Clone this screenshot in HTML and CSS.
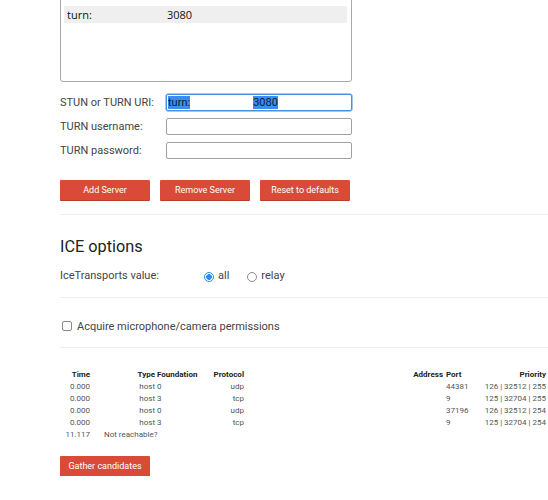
FILE: index.html
```html
<!DOCTYPE html>
<html>
<head>
<meta charset="utf-8">
<link rel="stylesheet" href="styles.css">
</head>
<body>
<div class="page">
  <div class="listbox">
    <div class="option"><span class="opt-a">turn:</span><span class="opt-b">3080</span></div>
  </div>

  <div class="form">
    <div class="row">
      <label class="label">STUN or TURN URI:</label>
      <div class="input focused"><span class="sel">turn:</span><span class="sel sel-b">3080</span></div>
    </div>
    <div class="row">
      <label class="label">TURN username:</label>
      <div class="input"></div>
    </div>
    <div class="row">
      <label class="label">TURN password:</label>
      <div class="input"></div>
    </div>
  </div>

  <div class="buttons">
    <button class="btn">Add Server</button>
    <button class="btn">Remove Server</button>
    <button class="btn">Reset to defaults</button>
  </div>

  <div class="divider first"></div>

  <h2 class="title">ICE options</h2>
  <div class="ice-row">
    <span class="ice-label">IceTransports value:</span>
    <span class="radio checked"></span><span class="radio-text">all</span>
    <span class="radio"></span><span class="radio-text">relay</span>
  </div>

  <div class="divider d2"></div>

  <div class="check-row">
    <span class="checkbox"></span><span class="check-text">Acquire microphone/camera permissions</span>
  </div>

  <div class="divider d3"></div>

  <table class="cands">
    <colgroup>
      <col class="c-time"><col class="c-comp"><col class="c-type"><col class="c-found"><col class="c-proto"><col class="c-addr"><col class="c-port"><col class="c-prio">
    </colgroup>
    <thead>
      <tr><th class="r">Time</th><th></th><th class="r">Type</th><th class="l">Foundation</th><th class="r">Protocol</th><th class="r addr">Address</th><th class="l">Port</th><th class="r prio">Priority</th></tr>
    </thead>
    <tbody>
      <tr><td class="r">0.000</td><td></td><td class="r">host</td><td class="l">0</td><td class="r">udp</td><td></td><td class="l">44381</td><td class="r prio">126 | 32512 | 255</td></tr>
      <tr><td class="r">0.000</td><td></td><td class="r">host</td><td class="l">3</td><td class="r">tcp</td><td></td><td class="l">9</td><td class="r prio">125 | 32704 | 255</td></tr>
      <tr><td class="r">0.000</td><td></td><td class="r">host</td><td class="l">0</td><td class="r">udp</td><td></td><td class="l">37196</td><td class="r prio">126 | 32512 | 254</td></tr>
      <tr><td class="r">0.000</td><td></td><td class="r">host</td><td class="l">3</td><td class="r">tcp</td><td></td><td class="l">9</td><td class="r prio">125 | 32704 | 254</td></tr>
      <tr><td class="r">11.117</td><td></td><td class="l" colspan="6">Not reachable?</td></tr>
    </tbody>
  </table>

  <button class="btn gather">Gather candidates</button>
</div>
</body>
</html>
```

FILE: styles.css
```css
html, body {
  margin: 0;
  padding: 0;
  background: #fff;
  overflow: hidden;
}
body {
  font-family: Roboto, "Liberation Sans", sans-serif;
  color: #444;
}
.page {
  padding-left: 60px;
  width: 488px;
}
.listbox {
  box-sizing: border-box;
  margin-top: -4px;
  height: 86px;
  width: 292px;
  border: 1px solid #a9a9a9;
  border-radius: 3px;
  padding: 9px 4px 0 3px;
}
.option {
  display: flex;
  height: 17px;
  align-items: center;
  background: #efefef;
  font-family: "Open Sans", sans-serif;
  font-size: 11px;
  color: #111;
  padding-left: 3px;
}
.opt-a {
  width: 100px;
}
.form {
  margin-top: 12px;
  display: flex;
  flex-direction: column;
  gap: 7px;
}
.row {
  display: flex;
  align-items: center;
  height: 17px;
}
.label {
  width: 106px;
  font-size: 11px;
  color: #444;
}
.input {
  box-sizing: border-box;
  width: 186px;
  height: 17px;
  border: 1px solid #a0a0a0;
  border-radius: 2px;
  display: flex;
  align-items: center;
  padding-left: 1px;
  font-size: 11px;
}
.input.focused {
  border-color: #4a90e2;
  box-shadow: 0 0 0 0.5px #4a90e2;
}
.sel {
  background: #3b8ef0;
  color: #0d1b3a;
  line-height: 13px;
}
.sel-b {
  margin-left: 63px;
}
.buttons {
  margin-top: 21px;
  display: flex;
  gap: 10px;
}
.btn {
  box-sizing: border-box;
  width: 90px;
  height: 20px;
  border: none;
  border-radius: 1px;
  background: #d94a38;
  box-shadow: 0 1px 0 #b83c2d;
  color: #fff;
  font-family: Roboto, sans-serif;
  font-size: 9px;
  padding: 0;
  margin: 0;
}
.divider {
  height: 1px;
  background: #ededed;
  margin-right: -10px;
}
.divider.first {
  margin-top: 14px;
}
.title {
  margin: 22px 0 0 0;
  font-size: 16.3px;
  line-height: 20px;
  font-weight: 400;
  color: #222;
}
.ice-row {
  margin-top: 12px;
  display: flex;
  align-items: center;
  height: 14px;
  font-size: 11px;
  line-height: 14px;
}
.ice-label {
  width: 144px;
}
.radio {
  box-sizing: border-box;
  width: 10px;
  height: 10px;
  border-radius: 50%;
  border: 1px solid #8a8a8a;
  margin-right: 4px;
  margin-top: 2px;
}
.radio.checked {
  border: 1px solid #2c8ee8;
  background: radial-gradient(circle, #2c8ee8 0 2.6px, #fff 3.1px);
}
.radio-text {
  margin-right: 18px;
}
.divider.d2 {
  margin-top: 14px;
}
.check-row {
  margin-top: 21px;
  height: 14px;
  display: flex;
  align-items: center;
  padding-left: 2px;
  font-size: 11px;
}
.checkbox {
  box-sizing: border-box;
  width: 10px;
  height: 10px;
  border: 1px solid #8a8a8a;
  border-radius: 2px;
  margin-right: 5px;
}
.divider.d3 {
  margin-top: 14px;
}
.cands {
  margin-top: 21px;
  width: 488px;
  table-layout: fixed;
  border-collapse: collapse;
  font-size: 8px;
}
.c-time { width: 31px; }
.c-comp { width: 12px; }
.c-type { width: 53px; }
.c-found { width: 42px; }
.c-proto { width: 47px; }
.c-addr { width: 200px; }
.c-port { width: 21px; }
.c-prio { width: 82px; }
.cands th, .cands td {
  height: 12px;
  padding: 0 1px;
  line-height: 12px;
  white-space: nowrap;
  overflow: visible;
}
.cands th {
  font-weight: 700;
  color: #222;
}
.cands td {
  color: #555;
}
.r { text-align: right; }
.l { text-align: left; }
.addr { padding-right: 2px !important; }
.prio { padding-right: 2px !important; }
.gather {
  display: block;
  margin-top: 15px;
}
```
